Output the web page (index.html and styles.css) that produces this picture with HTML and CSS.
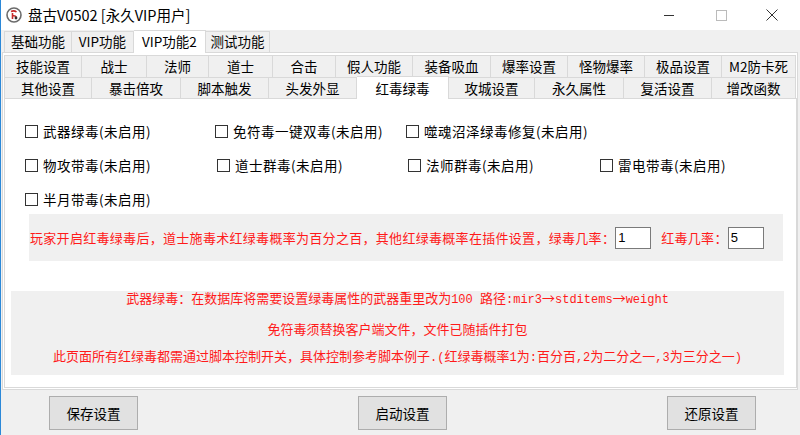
FILE: index.html
```html
<!DOCTYPE html>
<html lang="zh-CN">
<head>
  <meta charset="UTF-8" />
  <title>盘古V0502 [永久VIP用户]</title>
  <link rel="stylesheet" href="styles.css">
</head>
<body>
  <div class="window">
    <div class="titlebar">
      <svg class="app-icon" width="16" height="16" viewBox="0 0 16 16">
        <circle cx="8" cy="8" r="7" fill="#fff" stroke="#6b6b6b" stroke-width="1.6"/>
        <path d="M5 4.5 Q8 3 10.5 5 M6.5 6 V12 M6.5 9 Q9 8 10.5 10.5" fill="none" stroke="#c62828" stroke-width="1.6"/>
        <circle cx="10" cy="11" r="1.4" fill="#333"/>
      </svg>
      <div class="title">盘古V0502 [永久VIP用户]</div>
      <div class="controls">
        <span class="ctl"><svg width="10" height="10" viewBox="0 0 10 10"><path d="M0 5.5 H10" stroke="#333" stroke-width="1"/></svg></span>
        <span class="ctl"><svg width="11" height="11" viewBox="0 0 11 11"><rect x="0.5" y="0.5" width="10" height="10" fill="none" stroke="#bbb" stroke-width="1"/></svg></span>
        <span class="ctl"><svg width="12" height="12" viewBox="0 0 12 12"><path d="M0.5 0.5 L11.5 11.5 M11.5 0.5 L0.5 11.5" stroke="#333" stroke-width="1"/></svg></span>
      </div>
    </div>

    <div class="client">
      <div class="tabs top-tabs">
        <div class="tab" style="width:68px">基础功能</div>
        <div class="tab" style="width:62px">VIP功能</div>
        <div class="tab active" style="width:72px">VIP功能2</div>
        <div class="tab" style="width:64px">测试功能</div>
      </div>

      <div class="panel">
        <div class="tabs sub-tabs row1">
          <div class="tab" style="width:78px">技能设置</div>
          <div class="tab" style="width:65px">战士</div>
          <div class="tab" style="width:62px">法师</div>
          <div class="tab" style="width:64px">道士</div>
          <div class="tab" style="width:63px">合击</div>
          <div class="tab" style="width:77px">假人功能</div>
          <div class="tab" style="width:78px">装备吸血</div>
          <div class="tab" style="width:77px">爆率设置</div>
          <div class="tab" style="width:77px">怪物爆率</div>
          <div class="tab" style="width:77px">极品设置</div>
          <div class="tab" style="width:74px">M2防卡死</div>
        </div>
        <div class="tabs sub-tabs row2">
          <div class="tab" style="width:88px">其他设置</div>
          <div class="tab" style="width:89px">暴击倍攻</div>
          <div class="tab" style="width:88px">脚本触发</div>
          <div class="tab" style="width:88px">头发外显</div>
          <div class="tab active" style="width:92px">红毒绿毒</div>
          <div class="tab" style="width:86px">攻城设置</div>
          <div class="tab" style="width:89px">永久属性</div>
          <div class="tab" style="width:88px">复活设置</div>
          <div class="tab" style="width:84px">增改函数</div>
        </div>

        <div class="page">
          <div class="checks">
            <label class="check"><span class="box"></span>武器绿毒(未启用)</label>
            <label class="check"><span class="box"></span>免符毒一键双毒(未启用)</label>
            <label class="check wide"><span class="box"></span>噬魂沼泽绿毒修复(未启用)</label>
            <label class="check"><span class="box"></span>物攻带毒(未启用)</label>
            <label class="check shift"><span class="box"></span>道士群毒(未启用)</label>
            <label class="check shift"><span class="box"></span>法师群毒(未启用)</label>
            <label class="check"><span class="box"></span>雷电带毒(未启用)</label>
            <label class="check"><span class="box"></span>半月带毒(未启用)</label>
          </div>

          <div class="note rate-note">
            <span>玩家开启红毒绿毒后，道士施毒术红绿毒概率为百分之百，其他红绿毒概率在插件设置，绿毒几率：</span>
            <input class="field" type="text" value="1">
            <span class="gap-label">红毒几率：</span>
            <input class="field" type="text" value="5">
          </div>

          <div class="note info-note">
            <div>武器绿毒：在数据库将需要设置绿毒属性的武器重里改为<span class="mono">100 </span>路径<span class="mono">:mir3</span>→<span class="mono">stditems</span>→<span class="mono">weight</span></div>
            <div>免符毒须替换客户端文件，文件已随插件打包</div>
            <div>此页面所有红绿毒都需通过脚本控制开关，具体控制参考脚本例子<span class="mono">.(</span>红绿毒概率<span class="mono">1</span>为<span class="mono">:</span>百分百<span class="mono">,2</span>为二分之一<span class="mono">,3</span>为三分之一<span class="mono">)</span></div>
          </div>
        </div>
      </div>

      <div class="buttons">
        <button class="btn">保存设置</button>
        <button class="btn">启动设置</button>
        <button class="btn">还原设置</button>
      </div>
    </div>
  </div>
</body>
</html>
```

FILE: styles.css
```css
body {
  margin: 0;
  width: 800px;
  height: 435px;
  overflow: hidden;
  font-family: "Noto Sans CJK SC", "Liberation Sans", sans-serif;
  color: #000;
  background: #f0f0f0;
}
.window {
  height: 435px;
  border-left: 1px solid #2b88d8;
  box-sizing: border-box;
}
.titlebar {
  height: 30px;
  background: #fff;
  display: flex;
  align-items: center;
}
.app-icon {
  margin-left: 5px;
  margin-right: 6px;
}
.title {
  font-size: 14.5px;
  line-height: 30px;
  flex: 1;
}
.controls {
  display: flex;
  height: 30px;
}
.ctl {
  width: 53px;
  display: flex;
  align-items: center;
  justify-content: center;
}
.ctl:last-child {
  width: 48px;
  margin-right: 4px;
}
.client {
  background: #f0f0f0;
  padding: 0 2px 0 1px;
}
.tabs {
  display: flex;
  align-items: flex-end;
}
.tab {
  box-sizing: border-box;
  border: 1px solid #d9d9d9;
  border-left: none;
  background: #f0f0f0;
  font-size: 13.5px;
  text-align: center;
  white-space: nowrap;
}
.tab:first-child {
  border-left: 1px solid #d9d9d9;
}
.top-tabs {
  height: 22px;
  padding-left: 2px;
}
.top-tabs .tab {
  height: 21px;
  line-height: 19px;
  border-bottom: none;
}
.top-tabs .tab.active {
  height: 23px;
  margin-bottom: -1px;
  background: #fff;
  position: relative;
  line-height: 21px;
}
.panel {
  border: 1px solid #d9d9d9;
  background: #fff;
  padding: 2px 0 1px 1px;
}
.sub-tabs .tab {
  border-bottom: none;
}
.row1 {
  height: 22px;
}
.row1 .tab {
  height: 22px;
  line-height: 20px;
}
.row2 {
  height: 21px;
}
.row2 .tab {
  height: 21px;
  line-height: 20px;
}
.row2 .tab.active {
  height: 23px;
  margin-bottom: -1px;
  background: #fff;
  position: relative;
  line-height: 22px;
}
.page {
  height: 290px;
  box-sizing: border-box;
  border: 1px solid #d9d9d9;
  background: #fff;
  padding-top: 22px;
}
.checks {
  display: grid;
  grid-template-columns: 190px 191px 194px auto;
  row-gap: 14px;
  margin-left: 20px;
}
.check {
  display: flex;
  align-items: center;
  height: 20px;
  font-size: 13.5px;
  letter-spacing: 0.5px;
  white-space: nowrap;
}
.check.wide {
  grid-column: span 2;
}
.check.shift {
  margin-left: 2px;
}
.box {
  width: 11px;
  height: 11px;
  border: 1px solid #333;
  background: #fff;
  margin-right: 5px;
}
.note {
  background: #f0f0f0;
  color: #ff1a1a;
  font-size: 13px;
}
.rate-note {
  height: 47px;
  margin: 5px 13px 0 24px;
  padding-left: 1px;
  display: flex;
  align-items: center;
  letter-spacing: 0.3px;
  white-space: nowrap;
}
.field {
  width: 36px;
  height: 22px;
  box-sizing: border-box;
  border: 1px solid #7a7a7a;
  padding: 0 2px;
  margin: 0;
  font-family: "Liberation Sans", sans-serif;
  font-size: 13px;
  color: #000;
}
.gap-label {
  margin-left: 10px;
}
.info-note {
  height: 84px;
  box-sizing: border-box;
  margin: 30px 12px 0 6px;
  display: flex;
  flex-direction: column;
  align-items: center;
  gap: 14.5px;
  line-height: 13px;
  white-space: nowrap;
}
.mono {
  font-family: "Liberation Mono", monospace;
  font-size: 12px;
  letter-spacing: 0;
}
.buttons {
  display: flex;
  gap: 220px;
  padding: 6px 0 0 47px;
}
.btn {
  width: 89px;
  height: 34px;
  background: #e1e1e1;
  border: 1px solid #adadad;
  font-family: "Noto Sans CJK SC", sans-serif;
  font-size: 13.5px;
  color: #000;
  padding: 0;
}
```
